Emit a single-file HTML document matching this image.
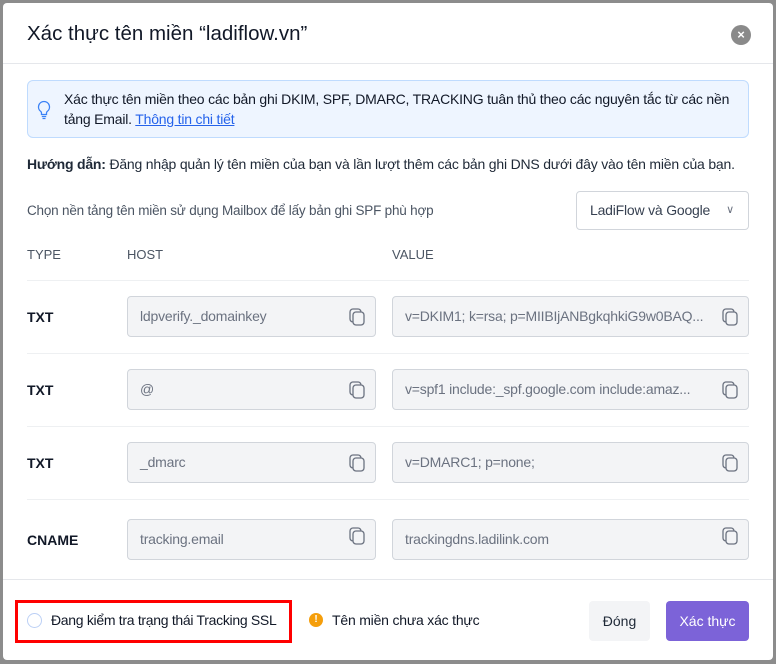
<!DOCTYPE html>
<html><head><meta charset="utf-8"><style>
*{box-sizing:border-box;margin:0;padding:0}
body{width:776px;height:664px;background:#8c8c8c;font-family:"Liberation Sans",sans-serif;position:relative;overflow:hidden;color:#1f2937}
.m{position:absolute;left:3px;top:3px;width:770px;height:657px;background:#fff;border-radius:4px}
.a{position:absolute;white-space:nowrap}
.t{font-size:20.5px;left:24px;top:19px;color:#111827}
.x{left:728px;top:22px;width:20px;height:20px;border-radius:50%;background:#8a8a8a;color:#fff;font-size:13px;font-weight:bold;text-align:center;line-height:20px}
.hl{position:absolute;left:0;width:770px;height:1px;background:#e5e7eb}
.info{left:24px;top:77px;width:722px;height:58px;background:#eef5ff;border:1px solid #bfdbfe;border-radius:6px}
.sm{font-size:13.5px;letter-spacing:-0.2px}
.in{position:absolute;height:41px;background:#f3f4f6;border:1px solid #d1d5db;border-radius:4px;font-size:14px;color:#6b7280;padding-left:12px;line-height:39px;letter-spacing:-0.2px;white-space:nowrap;overflow:hidden}
.cp{position:absolute;right:8px;top:11px}
.ty{font-size:14px;font-weight:bold;color:#111827;left:24px}
.div{position:absolute;left:24px;width:722px;height:1px;background:#eef0f2}
</style></head><body>
<div class="m">
<div class="a t">Xác thực tên miền “ladiflow.vn”</div>
<div class="a x">×</div>
<div class="hl" style="top:60px"></div>
<div class="a info"></div>
<svg class="a" style="left:34px;top:97px" width="14" height="20" viewBox="0 0 14 20"><path d="M7 1.5a5.5 5.5 0 0 0-3.3 9.9c.6.5.8 1.1.8 1.8v1.3h5v-1.3c0-.7.2-1.3.8-1.8A5.5 5.5 0 0 0 7 1.5zM4.8 16.5h4.4M5.5 18.5h3" fill="none" stroke="#3b82f6" stroke-width="1.3"/></svg>
<div class="a" style="left:61px;top:88px;color:#111827;font-size:14px;letter-spacing:-0.2px">Xác thực tên miền theo các bản ghi DKIM, SPF, DMARC, TRACKING tuân thủ theo các nguyên tắc từ các nền</div>
<div class="a" style="left:61px;top:108px;color:#111827;font-size:14px;letter-spacing:-0.2px">tảng Email. <span style="color:#2563eb;text-decoration:underline">Thông tin chi tiết</span></div>
<div class="a" style="left:24px;top:153px;color:#1f2937;font-size:14px;letter-spacing:-0.2px"><b>Hướng dẫn:</b> Đăng nhập quản lý tên miền của bạn và lần lượt thêm các bản ghi DNS dưới đây vào tên miền của bạn.</div>
<div class="a sm" style="left:24px;top:200px;color:#4b5563">Chọn nền tảng tên miền sử dụng Mailbox để lấy bản ghi SPF phù hợp</div>
<div class="a" style="left:573px;top:188px;width:173px;height:39px;border:1px solid #d1d5db;border-radius:4px;font-size:14px;color:#374151;padding-left:13px;line-height:37px;letter-spacing:-0.2px">LadiFlow và Google<span style="position:absolute;right:14px;top:0;color:#6b7280;font-size:11px">&#8744;</span></div>
<div class="a" style="left:24px;top:244px;font-size:13px;color:#4b5563">TYPE</div>
<div class="a" style="left:124px;top:244px;font-size:13px;color:#4b5563">HOST</div>
<div class="a" style="left:389px;top:244px;font-size:13px;color:#4b5563">VALUE</div>
<div class="div" style="top:277px"></div>
<div class="div" style="top:350px"></div>
<div class="div" style="top:423px"></div>
<div class="div" style="top:496px"></div>

<div class="a ty" style="top:306px">TXT</div>
<div class="in" style="left:124px;top:293px;width:249px">ldpverify._domainkey<svg class="cp" width="18" height="19" viewBox="0 0 18 19"><rect x="1" y="1" width="11" height="13" rx="3" fill="none" stroke="#6b7280" stroke-width="1.3"/><rect x="4" y="4" width="11" height="13" rx="3" fill="#f3f4f6" stroke="#6b7280" stroke-width="1.3"/></svg></div>
<div class="in" style="left:389px;top:293px;width:357px">v=DKIM1; k=rsa; p=MIIBIjANBgkqhkiG9w0BAQ...<svg class="cp" width="18" height="19" viewBox="0 0 18 19"><rect x="1" y="1" width="11" height="13" rx="3" fill="none" stroke="#6b7280" stroke-width="1.3"/><rect x="4" y="4" width="11" height="13" rx="3" fill="#f3f4f6" stroke="#6b7280" stroke-width="1.3"/></svg></div>

<div class="a ty" style="top:379px">TXT</div>
<div class="in" style="left:124px;top:366px;width:249px">@<svg class="cp" width="18" height="19" viewBox="0 0 18 19"><rect x="1" y="1" width="11" height="13" rx="3" fill="none" stroke="#6b7280" stroke-width="1.3"/><rect x="4" y="4" width="11" height="13" rx="3" fill="#f3f4f6" stroke="#6b7280" stroke-width="1.3"/></svg></div>
<div class="in" style="left:389px;top:366px;width:357px">v=spf1 include:_spf.google.com include:amaz...<svg class="cp" width="18" height="19" viewBox="0 0 18 19"><rect x="1" y="1" width="11" height="13" rx="3" fill="none" stroke="#6b7280" stroke-width="1.3"/><rect x="4" y="4" width="11" height="13" rx="3" fill="#f3f4f6" stroke="#6b7280" stroke-width="1.3"/></svg></div>

<div class="a ty" style="top:452px">TXT</div>
<div class="in" style="left:124px;top:439px;width:249px">_dmarc<svg class="cp" width="18" height="19" viewBox="0 0 18 19"><rect x="1" y="1" width="11" height="13" rx="3" fill="none" stroke="#6b7280" stroke-width="1.3"/><rect x="4" y="4" width="11" height="13" rx="3" fill="#f3f4f6" stroke="#6b7280" stroke-width="1.3"/></svg></div>
<div class="in" style="left:389px;top:439px;width:357px">v=DMARC1; p=none;<svg class="cp" width="18" height="19" viewBox="0 0 18 19"><rect x="1" y="1" width="11" height="13" rx="3" fill="none" stroke="#6b7280" stroke-width="1.3"/><rect x="4" y="4" width="11" height="13" rx="3" fill="#f3f4f6" stroke="#6b7280" stroke-width="1.3"/></svg></div>

<div class="a ty" style="top:529px">CNAME</div>
<div class="in" style="left:124px;top:516px;width:249px">tracking.email<svg class="cp" style="top:7px" width="18" height="19" viewBox="0 0 18 19"><rect x="1" y="1" width="11" height="13" rx="3" fill="none" stroke="#6b7280" stroke-width="1.3"/><rect x="4" y="4" width="11" height="13" rx="3" fill="#f3f4f6" stroke="#6b7280" stroke-width="1.3"/></svg></div>
<div class="in" style="left:389px;top:516px;width:357px">trackingdns.ladilink.com<svg class="cp" style="top:7px" width="18" height="19" viewBox="0 0 18 19"><rect x="1" y="1" width="11" height="13" rx="3" fill="none" stroke="#6b7280" stroke-width="1.3"/><rect x="4" y="4" width="11" height="13" rx="3" fill="#f3f4f6" stroke="#6b7280" stroke-width="1.3"/></svg></div>

<div class="hl" style="top:576px"></div>
<div class="a" style="left:12px;top:597px;width:277px;height:43px;border:3px solid #f00"></div>
<div class="a" style="left:24px;top:610px;width:15px;height:15px;border-radius:50%;border:1.5px solid #bcd0f5"></div>
<div class="a" style="left:48px;top:609px;font-size:14px;letter-spacing:-0.3px;color:#111827">Đang kiểm tra trạng thái Tracking SSL</div>
<div class="a" style="left:306px;top:610px;width:14px;height:14px;border-radius:50%;background:#f59e0b;color:#fff;font-size:10px;font-weight:bold;text-align:center;line-height:14px">!</div>
<div class="a sm" style="left:329px;top:609px;font-size:14px;color:#111827">Tên miền chưa xác thực</div>
<div class="a" style="left:586px;top:598px;width:61px;height:40px;background:#f3f4f6;border-radius:4px;font-size:14px;text-align:center;line-height:40px;color:#1f2937">Đóng</div>
<div class="a" style="left:663px;top:598px;width:83px;height:40px;background:#7c63d8;border-radius:4px;font-size:14px;text-align:center;line-height:40px;color:#fff">Xác thực</div>
</div>
</body></html>
